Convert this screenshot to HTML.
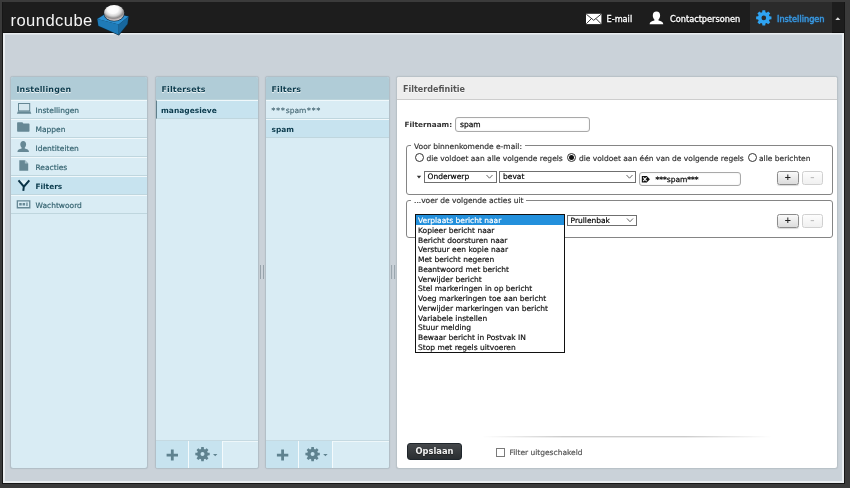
<!DOCTYPE html>
<html lang="nl">
<head>
<meta charset="utf-8">
<title>Roundcube Webmail :: Filters</title>
<style>
html,body{margin:0;padding:0}
body{width:850px;height:488px;overflow:hidden;background:#3a3a3a;position:relative;font-family:"DejaVu Sans","Liberation Sans",sans-serif;font-size:7.5px;color:#333}
.abs,.abs *{position:absolute;box-sizing:border-box}
.t{white-space:nowrap;line-height:10px;height:10px;-webkit-text-stroke:0.18px currentColor}
.abs .t span{position:static}
.boxtitle .t,.row.sel .t,.b{-webkit-text-stroke:0 !important}
svg{overflow:visible}
#frame-top{left:0;top:0;width:850px;height:2px;background:#3b3b3b}
#header{left:3px;top:2px;width:841px;height:31px;background:#1d1d1d;border-bottom:1px solid #101010}
#page{left:3px;top:33px;width:841px;height:450px;background:#cad2d9;border-left:2px solid #e9edf0;border-top:1px solid #e9edf0;border-right:2px solid #e9edf0;border-bottom:2px solid #e9edf0}
#page i{left:0;top:0;width:837px;height:1px;background:#dae0e5}
#inner{left:2px;top:2px;width:843px;height:482px;border:1px solid #161616;border-top:0}
#logo{left:7.5px;top:9px;font-family:"Liberation Sans",sans-serif;font-size:16.6px;line-height:20px;height:20px;color:#f4f4f4;letter-spacing:.42px;-webkit-text-stroke:0}
.nav{color:#fff;font-size:8.2px;-webkit-text-stroke:.3px currentColor;text-shadow:0 1px 1px #000}
#tab-sel{left:747px;top:0;width:81.5px;height:30.5px;background:#2b2b2b}
.box{background:#d9ecf4;border:1px solid #b3bfc7;border-radius:3px;overflow:hidden;box-shadow:0 0 1px #aab4bb}
.boxtitle{left:0;top:0;right:0;height:23px;background:#b0ccd7;border-bottom:1px solid #bbd3da;color:#0a3a4c;font-weight:bold;font-size:7.9px;letter-spacing:.17px}
.boxtitle .t{left:5.5px;top:7.5px;text-shadow:0 1px 1px #fff}
.row{left:0;right:0;height:19px;border-top:1px solid #f0f8fb;border-bottom:1px solid #bfd6de;color:#376572}
.row .t{top:4.5px}
.row.sel{background:#c7e3ef;color:#0a3a4c;font-weight:bold;font-size:7.4px}
.boxfooter{left:0;right:0;bottom:0;height:28px;border-top:1px solid #c5d9e1;background:#d9ecf4;box-shadow:inset 0 1px 0 #eef7fa}
.lb{top:0;height:27px;background:#c7e3ef;border-right:1px solid #f4fafc}
.ico{fill:#668895}
fieldset{margin:0;padding:0;border:1px solid #6e6e6e;border-radius:3px}
.leg{background:#fff;padding:0 3px;color:#333}
.sel-native{height:11px;border:1px solid #6f6f6f;background:#fff;color:#000}
.sel-native .t{left:3px;top:0;line-height:9px;height:9px}
.radio{width:9px;height:9px;border:1px solid #333;border-radius:50%;background:#fff}
.btn{height:14px;width:21.5px;border:1px solid #8c8c8c;border-radius:2.5px;background:linear-gradient(#fafafa,#dcdcdc);box-shadow:0 1px 1px rgba(0,0,0,.15);color:#222;font-weight:bold;text-align:center;font-size:8.5px;line-height:11.5px}
.btn.dis{border-color:#d0d0d0;color:#bdbdbd;background:linear-gradient(#fdfdfd,#f0f0f0);box-shadow:none}
.inp{border:1px solid #a9a9a9;border-radius:3px;background:#fff;box-shadow:inset 0 0 1.5px rgba(0,0,0,.15);color:#111}
.inp .t{-webkit-text-stroke:.25px currentColor}
#dd{left:415px;top:214px;width:150px;height:139px;background:#fff;border:1px solid #111;color:#111}
#dd .t{left:2px;height:9.75px;line-height:9.75px}
</style>
</head>
<body>
<div id="wrap" style="position:absolute;left:0;top:0;width:850px;height:488px;will-change:transform">
<div class="abs" id="frame-top"></div>
<div class="abs" id="header">
  <div class="t" id="logo">roundcube</div>
  <div id="tab-sel"></div>
  <div class="t nav" style="left:603.5px;top:12px">E-mail</div>
  <div class="t nav" style="left:667px;top:12px">Contactpersonen</div>
  <div class="t nav" style="left:774px;top:12px;color:#3a9ce6;text-shadow:0 0 2px rgba(40,140,230,.6)">Instellingen</div>
</div>
<div class="abs" id="inner"></div>
<div class="abs" id="page"><i></i></div>

<!-- panel 1 -->
<div class="abs box" style="left:10px;top:76px;width:137.5px;height:393px">
  <div class="boxtitle"><div class="t">Instellingen</div></div>
  <div class="row" style="top:23px"><div class="t" style="left:24.5px">Instellingen</div></div>
  <div class="row" style="top:42px"><div class="t" style="left:24.5px">Mappen</div></div>
  <div class="row" style="top:61px"><div class="t" style="left:24.5px">Identiteiten</div></div>
  <div class="row" style="top:80px"><div class="t" style="left:24.5px">Reacties</div></div>
  <div class="row sel" style="top:99px"><div class="t" style="left:24.5px">Filters</div></div>
  <div class="row" style="top:118px"><div class="t" style="left:24.5px">Wachtwoord</div></div>
</div>

<!-- panel 2 -->
<div class="abs box" style="left:155px;top:76px;width:104px;height:393px">
  <div class="boxtitle"><div class="t">Filtersets</div></div>
  <div class="row sel" style="top:23px;border-left:1.5px solid #5f7f8b"><div class="t" style="left:4px;font-size:7.5px">managesieve</div></div>
  <div class="boxfooter"><div class="lb" style="left:0;width:32.5px"></div><div class="lb" style="left:32.5px;width:34px"></div></div>
</div>

<!-- panel 3 -->
<div class="abs box" style="left:265px;top:76px;width:124.5px;height:393px">
  <div class="boxtitle"><div class="t">Filters</div></div>
  <div class="row" style="top:23px;color:#4f6f7b"><div class="t" style="left:5.5px"><span style="letter-spacing:1px">***</span>spam<span style="letter-spacing:1px;margin-left:.6px">***</span></div></div>
  <div class="row sel" style="top:42px"><div class="t" style="left:5.5px">spam</div></div>
  <div class="boxfooter"><div class="lb" style="left:0;width:33px"></div><div class="lb" style="left:33px;width:33.5px"></div></div>
</div>

<!-- panel 4 -->
<div class="abs box" style="left:396px;top:76px;width:441.5px;height:393px;background:#fff;border-color:#b9c2c8">
  <div class="boxtitle" style="background:#eee;border-bottom:1px solid #cdcdcd;color:#555;font-size:8.05px;letter-spacing:0"><div class="t" style="left:6px;top:7.5px">Filterdefinitie</div></div>
</div>

<!-- form -->
<div class="abs" id="form" style="left:0;top:0;width:850px;height:488px">
  <div class="t b" style="left:404.5px;top:119.5px;font-weight:bold;font-size:7.3px;color:#333">Filternaam:</div>
  <div class="inp" style="left:455px;top:117px;width:135px;height:15px"><div class="t" style="left:4px;top:1.5px">spam</div></div>

  <div style="left:406px;top:145px;width:427px;height:50px;border:1px solid #858585;border-radius:3px"></div>
  <div class="t leg" style="left:411px;top:142px">Voor binnenkomende e-mail:</div>
  <div class="radio" style="left:414.8px;top:153px"></div>
  <div class="t" style="left:426.5px;top:153.5px">die voldoet aan alle volgende regels</div>
  <div class="radio" style="left:567px;top:153px"><div style="left:1px;top:1px;width:5px;height:5px;border-radius:50%;background:#111"></div></div>
  <div class="t" style="left:579px;top:153.5px">die voldoet aan één van de volgende regels</div>
  <div class="radio" style="left:748px;top:153px"></div>
  <div class="t" style="left:759px;top:153.5px">alle berichten</div>

  <div class="sel-native" style="left:423.5px;top:171px;width:73px;height:11.5px"><div class="t">Onderwerp</div></div>
  <div class="sel-native" style="left:499px;top:171px;width:137px;height:11.5px"><div class="t">bevat</div></div>
  <div class="inp" style="left:639px;top:172px;width:101.5px;height:13.5px"><div class="t" style="left:15.5px;top:1.5px">***spam***</div></div>
  <div class="btn" style="left:777px;top:170.5px">+</div>
  <div class="btn dis" style="left:801.5px;top:170.5px">–</div>

  <div style="left:406px;top:200px;width:427px;height:38px;border:1px solid #858585;border-radius:3px"></div>
  <div class="t leg" style="left:411px;top:195.5px">...voer de volgende acties uit</div>
  <div class="sel-native" style="left:566.5px;top:215px;width:70.5px"><div class="t">Prullenbak</div></div>
  <div class="btn" style="left:777px;top:213.5px">+</div>
  <div class="btn dis" style="left:801.5px;top:213.5px">–</div>

  <div id="dd">
    <div style="left:0;top:0;width:148px;height:10px;background:#2390dc"></div>
    <div class="t" style="top:1.10px;color:#fff">Verplaats bericht naar</div>
    <div class="t" style="top:10.85px">Kopieer bericht naar</div>
    <div class="t" style="top:20.60px">Bericht doorsturen naar</div>
    <div class="t" style="top:30.35px">Verstuur een kopie naar</div>
    <div class="t" style="top:40.10px">Met bericht negeren</div>
    <div class="t" style="top:49.85px">Beantwoord met bericht</div>
    <div class="t" style="top:59.60px">Verwijder bericht</div>
    <div class="t" style="top:69.35px">Stel markeringen in op bericht</div>
    <div class="t" style="top:79.10px">Voeg markeringen toe aan bericht</div>
    <div class="t" style="top:88.85px">Verwijder markeringen van bericht</div>
    <div class="t" style="top:98.60px">Variabele instellen</div>
    <div class="t" style="top:108.35px">Stuur melding</div>
    <div class="t" style="top:118.10px">Bewaar bericht in Postvak IN</div>
    <div class="t" style="top:127.85px">Stop met regels uitvoeren</div>
  </div>

  <div style="left:482px;top:436px;width:290px;height:1px;background:linear-gradient(90deg,rgba(0,0,0,0),rgba(0,0,0,.2) 28%,rgba(0,0,0,.2) 70%,rgba(0,0,0,0))"></div>
  <div style="left:482px;top:437px;width:290px;height:1px;background:linear-gradient(90deg,rgba(0,0,0,0),rgba(0,0,0,.08) 28%,rgba(0,0,0,.08) 70%,rgba(0,0,0,0))"></div>
  <div style="left:407px;top:443px;width:55px;height:16.5px;border-radius:3px;border:1px solid #1f262c;background:linear-gradient(#45484b,#2a2e31);color:#f2f2f2;font-weight:bold;font-size:8.3px;text-align:center;line-height:14px;text-shadow:0 1px 1px #222">Opslaan</div>
  <div style="left:496px;top:448px;width:9px;height:9px;border:1px solid #7a7a7a;background:#fff"></div>
  <div class="t" style="left:509.5px;top:448px;color:#555">Filter uitgeschakeld</div>
</div>
</div>
<svg class="abs" id="icons" style="left:0;top:0" width="850" height="488" viewBox="0 0 850 488">
<defs>
<radialGradient id="ballg" cx="0.47" cy="0.34" r="0.7" fx="0.42" fy="0.24">
<stop offset="0" stop-color="#ffffff"/><stop offset="0.38" stop-color="#fafafa"/><stop offset="0.58" stop-color="#d4d4d4"/><stop offset="0.76" stop-color="#8b8989"/><stop offset="0.88" stop-color="#c4baba"/><stop offset="1" stop-color="#f4eeee"/>
</radialGradient>
</defs>
<!-- logo cube -->
<g>
<path d="M96.8 18.6 L108.5 11.5 L129 16.2 L128 24.5 L118.9 35.4 L98 26.2Z" fill="#0d2a3c"/>
<path d="M97.4 19 L108.5 12 L128.5 16.4 L118.7 24.4Z" fill="#2b8fd0"/>
<path d="M97.4 19 L118.7 24.4 L118.7 34.7 L98.4 25.8Z" fill="#1f7bb8"/>
<path d="M118.7 24.4 L128.5 16.4 L127.4 24 L118.7 34.7Z" fill="#17679e"/>
<ellipse cx="114.1" cy="14" rx="10.4" ry="7.6" fill="#123650"/>
<ellipse cx="114.1" cy="12.8" rx="10.1" ry="7.9" fill="url(#ballg)"/>
</g>
<!-- mail -->
<g>
<rect x="586" y="13.8" width="15.4" height="10.3" fill="#fff"/>
<path d="M586.3 14.2 L593.7 20.3 L601.1 14.2 M586.3 23.8 L591.4 18.6 M601.1 23.8 L596 18.6" stroke="#222" stroke-width="0.9" fill="none"/>
</g>
<!-- person -->
<path d="M656.5 11.6 c2.3 0 3.6 1.6 3.6 4 c0 1.7 -0.7 3.2 -1.6 4 v1 c2.6 0.5 4.8 1.4 4.8 3.6 h-13.7 c0 -2.2 2.2 -3.1 4.8 -3.6 v-1 c-0.9 -0.8 -1.6 -2.3 -1.6 -4 c0 -2.4 1.3 -4 3.7 -4Z" fill="#fff"/>
<!-- gear nav -->
<path d="M762.15 12.23 L762.40 10.23 L765.20 10.23 L765.45 12.23 L766.64 12.73 L768.23 11.48 L770.22 13.47 L768.97 15.06 L769.47 16.25 L771.47 16.50 L771.47 19.30 L769.47 19.55 L768.97 20.74 L770.22 22.33 L768.23 24.32 L766.64 23.07 L765.45 23.57 L765.20 25.57 L762.40 25.57 L762.15 23.57 L760.96 23.07 L759.37 24.32 L757.38 22.33 L758.63 20.74 L758.13 19.55 L756.13 19.30 L756.13 16.50 L758.13 16.25 L758.63 15.06 L757.38 13.47 L759.37 11.48 L760.96 12.73Z M761.50 17.90 a2.3 2.3 0 1 0 4.6 0 a2.3 2.3 0 1 0 -4.6 0Z" fill="#2fa4f2" fill-rule="evenodd"/>
<!-- up arrow -->
<path d="M835.3 19.9 L837.8 17.2 L840.3 19.9Z" fill="#ddd"/>

<!-- list icons -->
<g fill="#668895">
<!-- laptop -->
<path d="M18 103 h12.2 v8.3 h-12.2Z M19.1 104.1 v6.1 h10 v-6.1Z" fill-rule="evenodd"/>
<rect x="19.1" y="104.1" width="10" height="6.1" fill="#d6e8ef"/>
<path d="M17.9 111.3 h12.4 l1 2.4 h-14.4Z"/>
<!-- folder -->
<path d="M17.1 123 q0 -0.7 0.7 -0.7 h4.6 l1 1.3 h5.4 q0.7 0 0.7 0.7 v6.8 q0 0.7 -0.7 0.7 h-11 q-0.7 0 -0.7 -0.7Z"/>
<!-- person -->
<path d="M23.2 141 c1.8 0 2.9 1.3 2.9 3.3 c0 1.4 -0.6 2.6 -1.3 3.3 v0.8 c2.2 0.4 4.2 1.2 4.2 3.6 h-11.6 c0 -2.4 2 -3.2 4.2 -3.6 v-0.8 c-0.7 -0.7 -1.3 -1.9 -1.3 -3.3 c0 -2 1.1 -3.3 2.9 -3.3Z"/>
<!-- document -->
<path d="M19.3 160.2 h5.6 l3.3 3.3 v7.3 h-8.9Z"/>
<path d="M24.9 160.2 v3.3 h3.3Z" fill="#a9c3cd"/>
<!-- password -->
<path d="M16.7 200.2 h13.7 v8.2 h-13.7Z M18 201.5 v5.6 h11.1 v-5.6Z" fill-rule="evenodd"/>
<rect x="19.2" y="203" width="2.5" height="2.5"/><rect x="22.6" y="203" width="2.5" height="2.5"/><rect x="26.3" y="202.5" width="1.3" height="3.6"/>
</g>
<!-- filter Y -->
<path d="M20.2 180.6 L27.6 180.6 L23.9 185Z" fill="#eaf5fa" opacity="0.7"/>
<path d="M18.5 180.4 L23.9 186.7 L29.3 180.4 M23.9 186 L23.3 190.8" stroke="#0b3346" stroke-width="2" fill="none" stroke-linejoin="miter"/>

<!-- footer icons -->
<g fill="#5f828f">
<path d="M170.9 449.6 h2.8 v4.1 h4.3 v2.8 h-4.3 v4.1 h-2.8 v-4.1 h-4.3 v-2.8 h4.3Z"/>
<path d="M281.2 449.6 h2.8 v4.1 h4.3 v2.8 h-4.3 v4.1 h-2.8 v-4.1 h-4.3 v-2.8 h4.3Z"/>
<path d="M201.03 448.90 L201.24 446.91 L203.76 446.91 L203.97 448.90 L205.14 449.39 L206.70 448.13 L208.47 449.90 L207.21 451.46 L207.70 452.63 L209.69 452.84 L209.69 455.36 L207.70 455.57 L207.21 456.74 L208.47 458.30 L206.70 460.07 L205.14 458.81 L203.97 459.30 L203.76 461.29 L201.24 461.29 L201.03 459.30 L199.86 458.81 L198.30 460.07 L196.53 458.30 L197.79 456.74 L197.30 455.57 L195.31 455.36 L195.31 452.84 L197.30 452.63 L197.79 451.46 L196.53 449.90 L198.30 448.13 L199.86 449.39Z M200.50 454.10 a2.0 2.0 0 1 0 4.0 0 a2.0 2.0 0 1 0 -4.0 0Z" fill-rule="evenodd"/>
<path d="M311.13 448.90 L311.34 446.91 L313.86 446.91 L314.07 448.90 L315.24 449.39 L316.80 448.13 L318.57 449.90 L317.31 451.46 L317.80 452.63 L319.79 452.84 L319.79 455.36 L317.80 455.57 L317.31 456.74 L318.57 458.30 L316.80 460.07 L315.24 458.81 L314.07 459.30 L313.86 461.29 L311.34 461.29 L311.13 459.30 L309.96 458.81 L308.40 460.07 L306.63 458.30 L307.89 456.74 L307.40 455.57 L305.41 455.36 L305.41 452.84 L307.40 452.63 L307.89 451.46 L306.63 449.90 L308.40 448.13 L309.96 449.39Z M310.60 454.10 a2.0 2.0 0 1 0 4.0 0 a2.0 2.0 0 1 0 -4.0 0Z" fill-rule="evenodd"/>
<path d="M213 453.9 h4.4 l-2.2 2.4Z"/>
<path d="M323.2 453.9 h4.4 l-2.2 2.4Z"/>
</g>
<!-- splitters -->
<g stroke="#97a3ab" stroke-width="1">
<line x1="260.5" y1="265" x2="260.5" y2="279"/><line x1="263.5" y1="265" x2="263.5" y2="279"/>
<line x1="391.6" y1="265" x2="391.6" y2="279"/><line x1="394.6" y1="265" x2="394.6" y2="279"/>
</g>
<!-- select chevrons -->
<g stroke="#555" stroke-width="0.9" fill="none">
<path d="M486.5 175 L489.5 178.2 L492.5 175"/>
<path d="M626.5 175 L629.5 178.2 L632.5 175"/>
<path d="M627 218.5 L630 221.7 L633 218.5"/>
</g>
<path d="M416.8 175.8 h4.4 l-2.2 2.6Z" fill="#333"/>
<!-- tag icon -->
<path d="M641.8 176 h5 l3.1 3.3 l-3.1 3.3 h-5Z" fill="#111"/>
<path d="M643.2 177.4 L646.6 181.2 M646.6 177.4 L643.2 181.2" stroke="#fff" stroke-width="1.1" fill="none"/>
</svg>
</body>
</html>
